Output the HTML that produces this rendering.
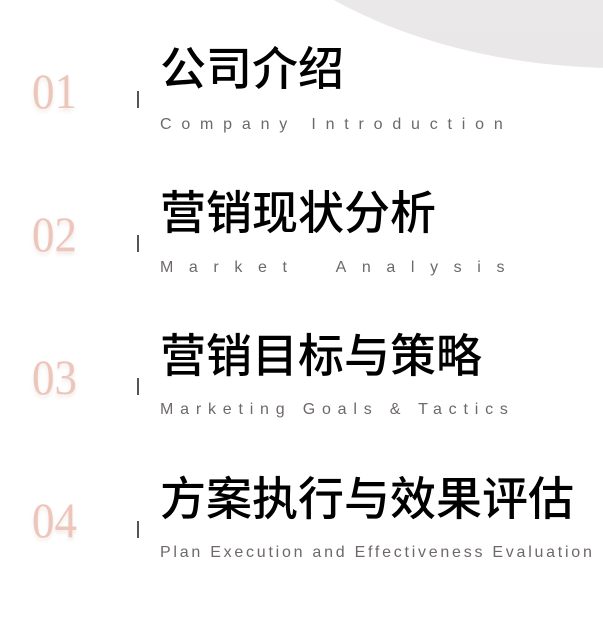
<!DOCTYPE html>
<html><head><meta charset="utf-8"><style>
body{margin:0;width:603px;height:617px;background:#fff;position:relative;overflow:hidden;font-family:"Liberation Sans","Noto Sans CJK SC",sans-serif}
.bg{position:absolute;left:190px;top:-468px;width:860px;height:536px;border-radius:50%;background:linear-gradient(180deg,#f1eded,#e9e7e7)}
.num{position:absolute;left:32px;font-family:"Liberation Serif",serif;font-size:50px;color:#edc6bb;text-shadow:0 3px 4px rgba(200,170,160,.25);line-height:1;transform:scaleX(0.9);transform-origin:left top}
.tick{position:absolute;left:137px;width:2px;height:17px;background:#555}
.t{position:absolute;left:160px;font-size:46px;color:#000;line-height:1;white-space:nowrap;font-family:"Liberation Sans","Noto Sans CJK SC",sans-serif;font-weight:500}
.s{position:absolute;left:160px;font-size:16px;color:#6e6868;line-height:1;white-space:nowrap}
</style></head><body>
<div class="bg"></div>

<div class="num" style="top:66px">01</div>
<div class="tick" style="top:91px"></div>
<div class="t" style="top:46px">公司介绍</div>
<div class="s" style="top:117px;letter-spacing:9.8px">Company Introduction</div>

<div class="num" style="top:209px">02</div>
<div class="tick" style="top:235px"></div>
<div class="t" style="top:190px">营销现状分析</div>
<div class="s" style="top:260px;letter-spacing:15.6px;word-spacing:14px">Market Analysis</div>

<div class="num" style="top:352px">03</div>
<div class="tick" style="top:378px"></div>
<div class="t" style="top:333px">营销目标与策略</div>
<div class="s" style="top:402px;letter-spacing:6.8px">Marketing Goals &amp; Tactics</div>

<div class="num" style="top:495px">04</div>
<div class="tick" style="top:521px"></div>
<div class="t" style="top:476px">方案执行与效果评估</div>
<div class="s" style="top:545px;letter-spacing:2.75px">Plan Execution and Effectiveness Evaluation</div>
</body></html>
